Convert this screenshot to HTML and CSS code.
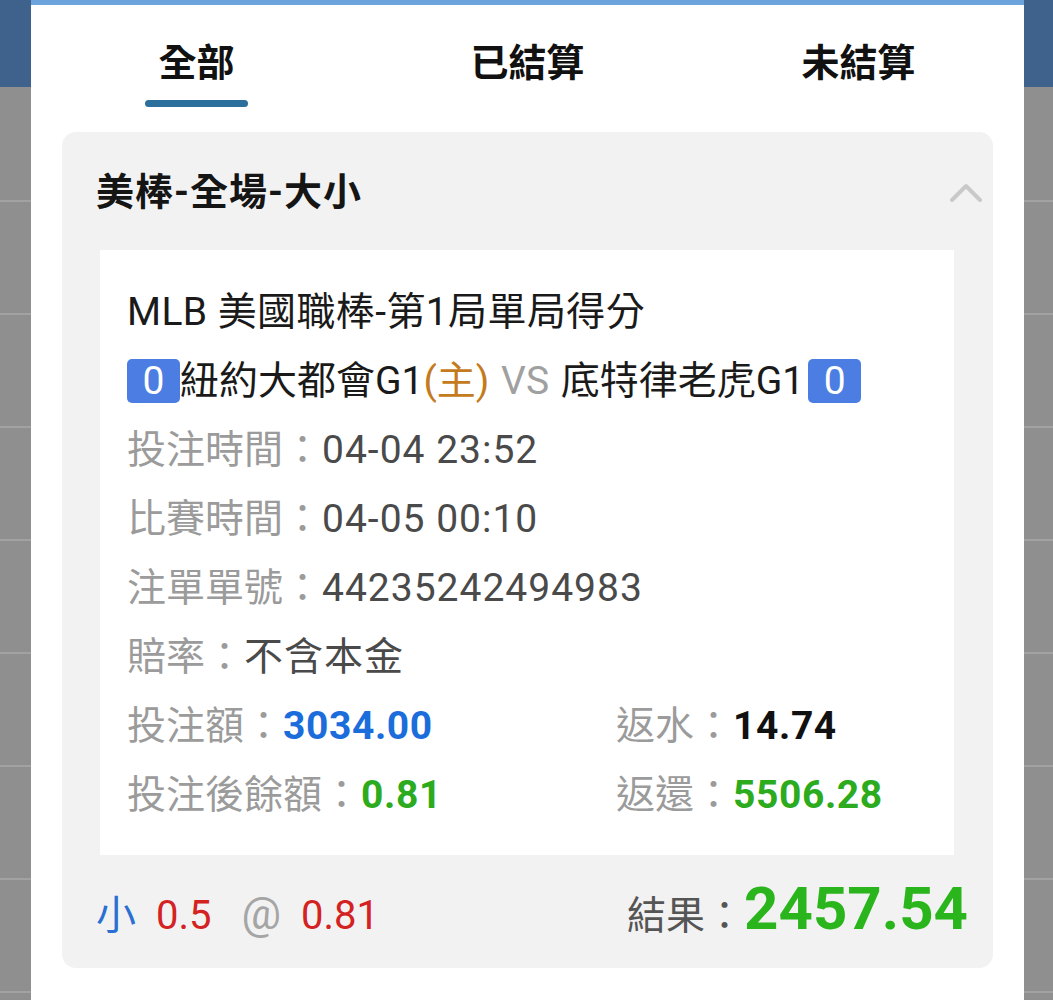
FILE: index.html
```html
<!DOCTYPE html>
<html lang="zh-Hant">
<head>
    <meta charset="UTF-8">
    <meta name="viewport" content="width=device-width, initial-scale=1.0">
    <title>注單詳情</title>
    <link rel="stylesheet" href="styles.css">
</head>
<body>

    <div class="sheet">
        <div class="tabs">
            <div class="tab active">
                <span class="tab-label">全部</span>
                <span class="tab-line"></span>
            </div>
            <div class="tab">
                <span class="tab-label">已結算</span>
            </div>
            <div class="tab">
                <span class="tab-label">未結算</span>
            </div>
        </div>

        <div class="card">
            <div class="card-head">
                <div class="card-title">美棒-全場-大小</div>
                <svg class="chevron" width="32" height="19" viewBox="0 0 32 19">
                    <polyline points="2,17 16,3 30,17" fill="none" stroke="#c9c9c9" stroke-width="4" stroke-linecap="round" stroke-linejoin="round"/>
                </svg>
            </div>

            <div class="detail">
                <div class="row league">MLB 美國職棒-第1局單局得分</div>
                <div class="row match">
                    <span class="score">0</span>紐約大都會G1<span class="home">(主)</span> <span class="vs">VS</span> 底特律老虎G1<span class="score right">0</span>
                </div>
                <div class="row"><span class="label">投注時間：</span><span class="value">04-04 23:52</span></div>
                <div class="row"><span class="label">比賽時間：</span><span class="value">04-05 00:10</span></div>
                <div class="row"><span class="label">注單單號：</span><span class="value">44235242494983</span></div>
                <div class="row"><span class="label">賠率：</span><span class="value">不含本金</span></div>

                <div class="amounts">
                    <div class="row"><span class="label">投注額：</span><span class="num blue">3034.00</span></div>
                    <div class="row"><span class="label">返水：</span><span class="num dark">14.74</span></div>
                    <div class="row"><span class="label">投注後餘額：</span><span class="num green">0.81</span></div>
                    <div class="row"><span class="label">返還：</span><span class="num green">5506.28</span></div>
                </div>
            </div>

            <div class="card-foot">
                <div class="bet">
                    <span class="side">小</span>
                    <span class="red">0.5</span>
                    <span class="at">@</span>
                    <span class="red">0.81</span>
                </div>
                <div class="result">
                    <span class="result-label">結果：</span><span class="result-num">2457.54</span>
                </div>
            </div>
        </div>
    </div>

</body>
</html>
```

FILE: styles.css
```css
body {
    margin: 0;
    font-family: Roboto, "Noto Sans CJK TC", sans-serif;
    color: #1a1a1a;
    /* the page behind the sheet: blue header, then grey list rows */
    background:
        linear-gradient(to bottom, #3e628b 0, #3e628b 87px, transparent 87px),
        repeating-linear-gradient(to bottom, #8f8f8f 0, #8f8f8f 111px, #a2a2a2 111px, #a2a2a2 113px);
    background-position: 0 0, 0 89px;
    background-repeat: no-repeat, repeat;
    background-color: #8f8f8f;
}

.sheet {
    width: 993px;
    min-height: 995px;
    margin: 0 auto 0 31px;
    background-color: #fff;
    border-top: 5px solid #6ba4dd;
}

/* tabs */
.tabs {
    display: flex;
    height: 110px;
}

.tab {
    flex: 1;
    display: flex;
    flex-direction: column;
    align-items: center;
    padding-top: 38px;
}

.tab-label {
    font-size: 38px;
    font-weight: bold;
    line-height: 40px;
    color: #111;
}

.tab-line {
    width: 103px;
    height: 7px;
    margin-top: 17px;
    border-radius: 4px;
    background-color: #2b6f9d;
}

/* card */
.card {
    margin: 17px 31px 0 31px;
    background-color: #f2f2f2;
    border-radius: 14px;
}

.card-head {
    height: 118px;
    display: flex;
    align-items: center;
    justify-content: space-between;
    padding: 0 11px 0 34px;
}

.card-title {
    font-size: 38px;
    font-weight: bold;
    color: #151515;
    padding-bottom: 6px;
    letter-spacing: 1px;
}

.chevron {
    margin-top: 2px;
}

.detail {
    margin: 0 39px 0 38px;
    padding: 28px 27px 25px 27px;
    background-color: #fff;
}

.row {
    font-size: 39px;
    line-height: 69px;
    white-space: nowrap;
}

.league,
.match {
    color: #1a1a1a;
}

.league {
    letter-spacing: 0.4px;
}

.score {
    display: inline-block;
    width: 53px;
    height: 44px;
    line-height: 44px;
    text-align: center;
    vertical-align: middle;
    margin-top: -6px;
    border-radius: 5px;
    background-color: #4b7de2;
    color: #fff;
}

.score.right {
    margin-left: 4px;
}

.home {
    color: #c47b1d;
}

.vs {
    color: #a0a0a0;
    margin: 0 2px;
}

.label {
    color: #9b9b9b;
}

.value {
    color: #4a4a4a;
    letter-spacing: 1px;
}

.amounts {
    display: grid;
    grid-template-columns: 489px 1fr;
}

.num {
    font-weight: bold;
    letter-spacing: 0.6px;
}

.blue {
    color: #1a6ddb;
}

.dark {
    color: #111;
}

.green {
    color: #2bab1d;
}

/* footer */
.card-foot {
    height: 113px;
    display: flex;
    align-items: center;
    justify-content: space-between;
    padding: 0 25px 0 34px;
}

.bet {
    display: flex;
    align-items: baseline;
    gap: 20px;
    font-size: 40px;
}

.side {
    color: #2a6fd2;
}

.red {
    color: #d42222;
}

.at {
    font-size: 44px;
    color: #a5a5a5;
    margin-left: 10px;
}

.result {
    display: flex;
    align-items: baseline;
    padding-bottom: 6px;
}

.result-label {
    font-size: 39px;
    color: #555;
}

.result-num {
    font-size: 60px;
    font-weight: bold;
    color: #2bb51d;
}
```
